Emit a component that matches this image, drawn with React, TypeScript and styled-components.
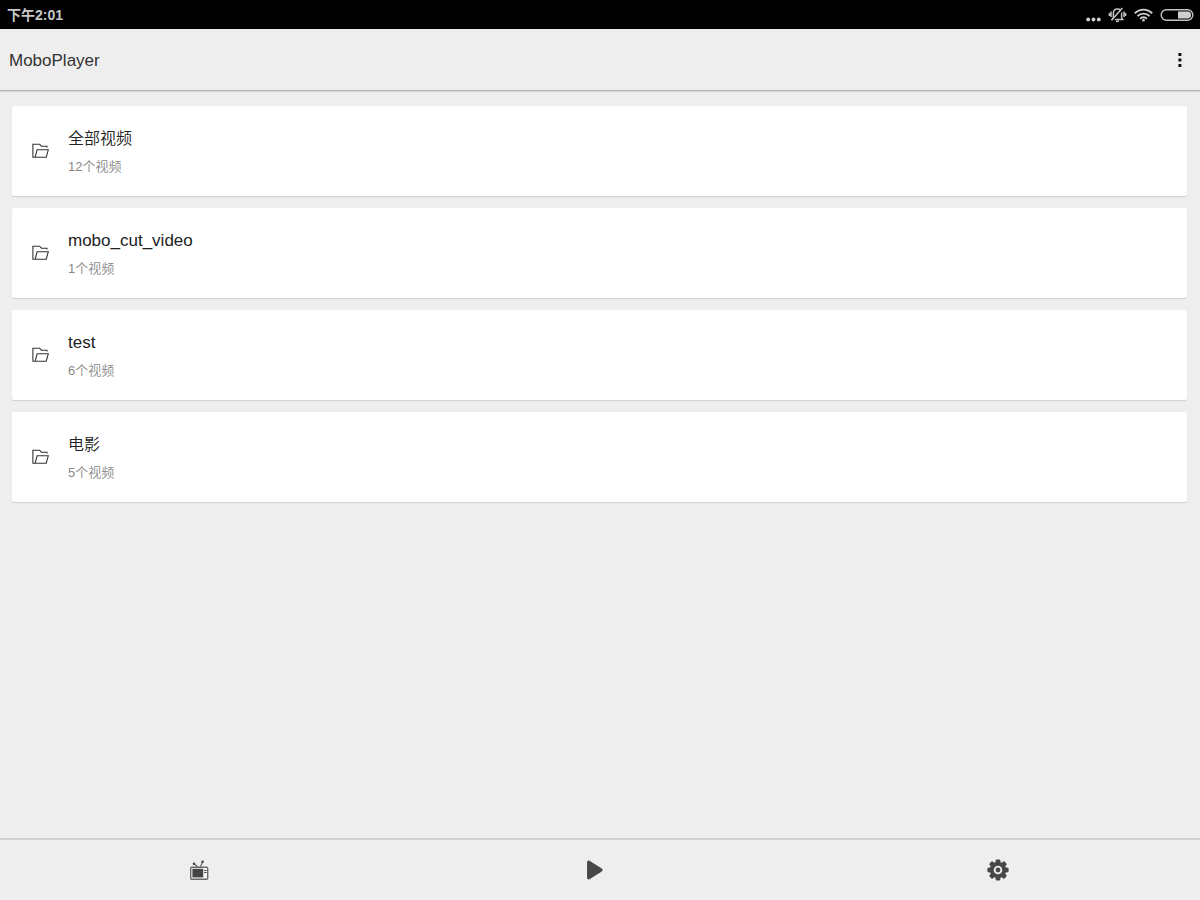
import React from "react";
import styled, { createGlobalStyle } from "styled-components";

const GlobalStyle = createGlobalStyle`
  * { box-sizing: border-box; }
  body {
    margin: 0;
    background: #eeeeee;
    font-family: "Liberation Sans", "Noto Sans CJK SC", sans-serif;
  }
`;

const Screen = styled.div`
  display: flex;
  flex-direction: column;
  min-height: 100vh;
`;

const StatusBar = styled.div`
  display: flex;
  align-items: center;
  justify-content: space-between;
  height: 29px;
  padding: 0 6px 0 7px;
  background: #000;
  color: #c8c8c8;
`;

const Clock = styled.time`
  font-size: 14px;
  line-height: 20px;
  font-weight: 700;
`;

const StatusIcons = styled.div`
  display: flex;
  align-items: center;
  gap: 7px;
`;

const Icon = styled.svg`
  display: block;
  flex: none;
`;

const AppBar = styled.header`
  display: flex;
  align-items: center;
  justify-content: space-between;
  height: 62px;
  padding: 2px 9px 0;
  border-bottom: 1px solid #b4b4b4;
  box-shadow: 0 1px 1px #dcdcdc;
`;

const AppTitle = styled.h1`
  margin: 0;
  color: #333;
  font-size: 17px;
  line-height: 24px;
  font-weight: 400;
`;

const IconButton = styled.button`
  display: grid;
  place-items: center;
  padding: 0;
  border: 0;
  background: none;
  cursor: pointer;
`;

const FolderList = styled.ul`
  display: flex;
  flex: 1;
  flex-direction: column;
  gap: 12px;
  margin: 0;
  padding: 15px 13px 15px 12px;
  list-style: none;
`;

const Card = styled.button`
  display: flex;
  align-items: center;
  gap: 19px;
  width: 100%;
  height: 90px;
  padding: 0 20px;
  border: 0;
  border-radius: 2px;
  background: #fff;
  box-shadow: 0 1px 1px #cfcfcf;
  font-family: inherit;
  font-weight: 350;
  text-align: left;
  cursor: pointer;
`;

const CardText = styled.span`
  display: flex;
  flex-direction: column;
  gap: 6px;
  padding-top: 2px;
`;

const FolderName = styled.span<{ $han: boolean }>`
  color: #222;
  font-size: ${(p) => (p.$han ? 16 : 17)}px;
  line-height: 24px;
`;

const FolderCount = styled.span`
  color: #888;
  font-size: 13px;
  line-height: 20px;
`;

const BottomNav = styled.nav`
  display: grid;
  grid-template-columns: repeat(3, 1fr);
  height: 62px;
  padding-right: 3px;
  border-top: 2px solid #d0d0d0;
`;

const folders = [
  { name: "全部视频", count: 12, han: true },
  { name: "mobo_cut_video", count: 1, han: false },
  { name: "test", count: 6, han: false },
  { name: "电影", count: 5, han: true },
];

const Dots = () => (
  <Icon width="15" height="18" viewBox="0 0 15 18" fill="#d0d0d0" aria-hidden="true">
    <circle cx="2.2" cy="13.5" r="1.9" />
    <circle cx="7.5" cy="13.5" r="1.9" />
    <circle cx="12.8" cy="13.5" r="1.9" />
  </Icon>
);

const MutedBell = () => (
  <Icon width="19" height="18" viewBox="0 0 19 18" fill="none" stroke="#c4c4c4" aria-hidden="true">
    <path d="M4.2 13.5H14.8L13.6 11.6V7.2C13.6 4.6 11.8 3 9.5 3S5.4 4.6 5.4 7.2V11.6Z" strokeWidth="1.5" />
    <path d="M8 15.3H11" strokeWidth="1.6" />
    <path d="M3 5.5V11M1.4 7V10M16 5.5V11M17.6 7V10" strokeWidth="1.5" />
    <path d="M4.6 14.4L14.8 3.2" stroke="#000" strokeWidth="2.4" />
    <path d="M3.6 14.2L14.4 2" strokeWidth="1.5" />
  </Icon>
);

const Wifi = () => (
  <Icon width="19" height="18" viewBox="0 0 19 18" fill="none" stroke="#d0d0d0" strokeWidth="1.9" aria-hidden="true">
    <path d="M.8 7.4C5.6 2.3 13.4 2.3 18.2 7.4" />
    <path d="M3.5 10.2C6.8 6.7 12.2 6.7 15.5 10.2" />
    <path d="M6.2 12.8C8 10.8 11 10.8 12.8 12.8" />
    <circle cx="9.5" cy="14.3" r="1.3" fill="#d0d0d0" stroke="none" />
  </Icon>
);

const Battery = () => (
  <Icon width="34" height="18" viewBox="0 0 34 18" aria-hidden="true">
    <rect x="1.2" y="3.7" width="31.6" height="10.6" rx="5.3" fill="none" stroke="#c4c4c4" strokeWidth="1.4" />
    <path d="M18 5.6H27.6A3.4 3.4 0 0 1 27.6 12.4H18Z" fill="#d0d0d0" />
  </Icon>
);

const Folder = () => (
  <Icon width="17" height="16" viewBox="0 0 17 16" fill="none" stroke="#333" strokeWidth="1.1" aria-hidden="true">
    <path d="M15 4.4V3.2H9.4L7.6 1.2H.9V14.2H14.2L16.3 6.8H5.1L3.2 14.2" />
  </Icon>
);

const Television = () => (
  <Icon width="20" height="22" viewBox="0 0 20 22" aria-hidden="true">
    <path d="M8 8.2L4.2 4.8M10.4 8.2L12.4 3" fill="none" stroke="#666" strokeWidth="1.2" />
    <circle cx="4" cy="4.8" r="1.3" fill="#444" />
    <circle cx="12.6" cy="2.8" r="1.3" fill="#444" />
    <rect x=".7" y="8.2" width="17" height="12" rx="1" fill="#f6f6f6" stroke="#6a6a6a" strokeWidth="1.4" />
    <rect x="2.4" y="9.8" width="10.8" height="8.6" fill="#444" />
    <path d="M14.2 11.5H16.6M14.2 13.5H16.6" stroke="#444" />
  </Icon>
);

const Play = () => (
  <Icon width="24" height="22" viewBox="0 0 24 22" aria-hidden="true">
    <path d="M.6 2.5V19.5Q1.1 20.5 2.4 19.8L14.8 12Q15.6 11 14.8 10L2.4 2.2Q1.1 1.5 .6 2.5Z" fill="#474747" stroke="#474747" />
  </Icon>
);

const Gear = () => (
  <Icon width="22" height="22" viewBox="0 0 22 22" aria-hidden="true">
    <g fill="#474747">
      {[0, 45, 90, 135, 180, 225, 270, 315].map((angle) => (
        <path key={angle} d="M8.2 5L8.8 1.2Q9 .4 9.7 .4H12.3Q13 .4 13.2 1.2L13.8 5Z" transform={`rotate(${angle} 11 11)`} />
      ))}
    </g>
    <circle cx="11" cy="11" r="6.2" fill="none" stroke="#474747" strokeWidth="3.8" />
    <circle cx="11" cy="11" r="2.4" fill="#474747" />
  </Icon>
);

const Overflow = () => (
  <Icon width="22" height="16" viewBox="0 0 22 16" fill="#111" aria-hidden="true">
    <rect x="9.4" y="0" width="3" height="3" />
    <rect x="9.4" y="5.5" width="3" height="3" />
    <rect x="9.4" y="11" width="3" height="3" />
  </Icon>
);

export default function App() {
  return (
    <>
      <GlobalStyle />
      <Screen>
        <StatusBar>
          <Clock dateTime="14:01">下午2:01</Clock>
          <StatusIcons>
            <Dots />
            <MutedBell />
            <Wifi />
            <Battery />
          </StatusIcons>
        </StatusBar>
        <AppBar>
          <AppTitle>MoboPlayer</AppTitle>
          <IconButton type="button" aria-label="更多">
            <Overflow />
          </IconButton>
        </AppBar>
        <FolderList>
          {folders.map((folder) => (
            <li key={folder.name}>
              <Card type="button">
                <Folder />
                <CardText>
                  <FolderName $han={folder.han}>{folder.name}</FolderName>
                  <FolderCount>{folder.count}个视频</FolderCount>
                </CardText>
              </Card>
            </li>
          ))}
        </FolderList>
        <BottomNav>
          <IconButton type="button" aria-label="视频">
            <Television />
          </IconButton>
          <IconButton type="button" aria-label="播放">
            <Play />
          </IconButton>
          <IconButton type="button" aria-label="设置">
            <Gear />
          </IconButton>
        </BottomNav>
      </Screen>
    </>
  );
}
